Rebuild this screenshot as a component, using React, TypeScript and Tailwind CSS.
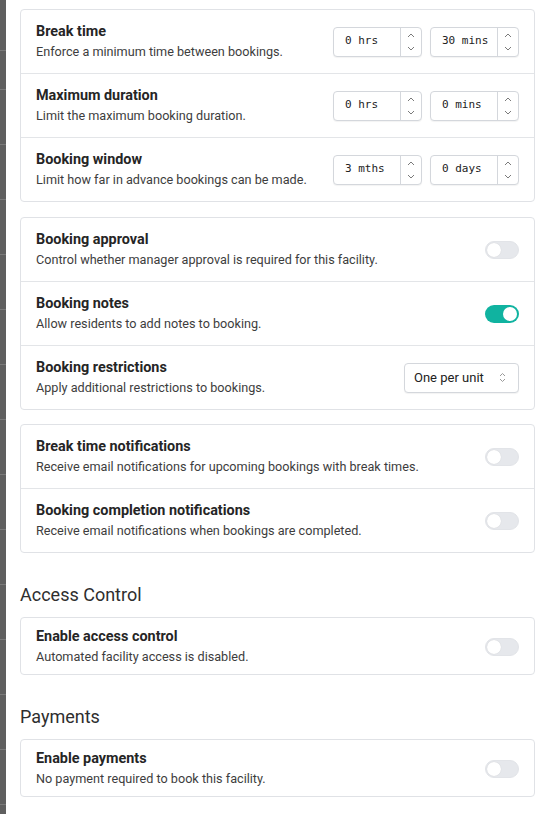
import React from "react";

const FONT = { fontFamily: "Roboto, 'Noto Sans', sans-serif" };

function Toggle({ on }: { on?: boolean }) {
  return on ? (
    <div className="flex h-[18px] w-[34px] shrink-0 items-center justify-end rounded-full bg-[#10b3a0] px-[2px]">
      <div className="h-[14px] w-[14px] rounded-full bg-white" />
    </div>
  ) : (
    <div className="flex h-[18px] w-[34px] shrink-0 items-center justify-start rounded-full border border-[#e2e4e8] bg-[#e6e8ec] px-[1px]">
      <div className="h-[14px] w-[14px] rounded-full bg-white shadow-[0_0_1px_rgba(0,0,0,0.15)]" />
    </div>
  );
}

function Spin({ value }: { value: string }) {
  return (
    <div className="flex h-[30px] w-[89px] rounded-[4px] border border-[#d4d7dc] bg-white shadow-[0_1px_1px_rgba(0,0,0,0.05)]">
      <div
        className="flex flex-1 items-center pl-[11px] text-[11px] text-[#222]"
        style={{ fontFamily: "'DejaVu Sans Mono', monospace" }}
      >
        {value}
      </div>
      <div className="flex w-[21px] flex-col items-center justify-center gap-[8px] border-l border-[#d4d7dc]">
        <svg width="8" height="5" viewBox="0 0 8 5" fill="none">
          <path d="M1 4L4 1L7 4" stroke="#7a7a7a" strokeWidth="1" />
        </svg>
        <svg width="8" height="5" viewBox="0 0 8 5" fill="none">
          <path d="M1 1L4 4L7 1" stroke="#7a7a7a" strokeWidth="1" />
        </svg>
      </div>
    </div>
  );
}

function Select() {
  return (
    <div className="flex h-[30px] w-[115px] items-center justify-between rounded-[4px] border border-[#d4d7dc] bg-white pl-[9px] pr-[12px] shadow-[0_1px_1px_rgba(0,0,0,0.05)]">
      <span className="text-[13px] text-[#222]">One per unit</span>
      <svg width="7" height="11" viewBox="0 0 7 11" fill="none">
        <path d="M1 4L3.5 1.5L6 4" stroke="#9a9a9a" strokeWidth="1" />
        <path d="M1 7L3.5 9.5L6 7" stroke="#9a9a9a" strokeWidth="1" />
      </svg>
    </div>
  );
}

function Text({ title, desc }: { title: string; desc: string }) {
  return (
    <div className="flex flex-col">
      <div className="text-[14.4px] font-bold leading-5 text-[#252525]">{title}</div>
      <div className="text-[12.65px] leading-5 text-[#3d3d3d]">{desc}</div>
    </div>
  );
}

function Row({
  title,
  desc,
  first,
  children,
}: {
  title: string;
  desc: string;
  first?: boolean;
  children: React.ReactNode;
}) {
  return (
    <div
      className={
        first
          ? "flex h-[63px] items-center justify-between pl-[15px] pr-[15px]"
          : "flex h-[64px] items-center justify-between border-t border-[#e3e5e8] pl-[15px] pr-[15px]"
      }
    >
      <Text title={title} desc={desc} />
      <div className="flex items-center gap-2">{children}</div>
    </div>
  );
}

function Card({ children }: { children: React.ReactNode }) {
  return <div className="rounded-[4px] border border-[#e0e2e6] bg-white">{children}</div>;
}

function Heading({ children }: { children: React.ReactNode }) {
  return (
    <div className="mb-[8px] mt-[28px] h-[28px] text-[18px] leading-[28px] text-[#2e2e2e]">{children}</div>
  );
}

function Line() {
  return <div className="h-px bg-[#7a7a7a]" />;
}

export default function App() {
  return (
    <div className="flex min-h-[814px] bg-white" style={FONT}>
      <div className="flex w-[6px] shrink-0 flex-col bg-[#5f5f5f]">
        <div className="h-[50px]" />
        <Line />
        <div className="h-[38px]" />
        <Line />
        <div className="h-[54px]" />
        <Line />
        <div className="h-[54px]" />
        <Line />
        <div className="h-[54px]" />
        <Line />
        <div className="h-[54px]" />
        <Line />
        <div className="h-[54px]" />
        <Line />
        <div className="h-[54px]" />
        <Line />
        <div className="h-[54px]" />
        <Line />
        <div className="h-[54px]" />
        <Line />
        <div className="h-[54px]" />
        <Line />
        <div className="h-[54px]" />
        <Line />
        <div className="h-[54px]" />
        <Line />
        <div className="h-[54px]" />
        <Line />
        <div className="h-[54px]" />
        <Line />
      </div>
      <div className="flex flex-1 flex-col pl-[14px] pr-[10px] pt-[9px]">
        <Card>
          <Row first title="Break time" desc="Enforce a minimum time between bookings.">
            <Spin value="0 hrs" />
            <Spin value="30 mins" />
          </Row>
          <Row title="Maximum duration" desc="Limit the maximum booking duration.">
            <Spin value="0 hrs" />
            <Spin value="0 mins" />
          </Row>
          <Row title="Booking window" desc="Limit how far in advance bookings can be made.">
            <Spin value="3 mths" />
            <Spin value="0 days" />
          </Row>
        </Card>
        <div className="h-[15px]" />
        <Card>
          <Row first title="Booking approval" desc="Control whether manager approval is required for this facility.">
            <Toggle />
          </Row>
          <Row title="Booking notes" desc="Allow residents to add notes to booking.">
            <Toggle on />
          </Row>
          <Row title="Booking restrictions" desc="Apply additional restrictions to bookings.">
            <Select />
          </Row>
        </Card>
        <div className="h-[14px]" />
        <Card>
          <Row first title="Break time notifications" desc="Receive email notifications for upcoming bookings with break times.">
            <Toggle />
          </Row>
          <Row title="Booking completion notifications" desc="Receive email notifications when bookings are completed.">
            <Toggle />
          </Row>
        </Card>
        <Heading>Access Control</Heading>
        <Card>
          <div className="flex items-center justify-between pb-[7px] pl-[15px] pr-[15px] pt-[9px]">
            <Text title="Enable access control" desc="Automated facility access is disabled." />
            <Toggle />
          </div>
        </Card>
        <Heading>Payments</Heading>
        <Card>
          <div className="flex items-center justify-between pb-[7px] pl-[15px] pr-[15px] pt-[9px]">
            <Text title="Enable payments" desc="No payment required to book this facility." />
            <Toggle />
          </div>
        </Card>
      </div>
    </div>
  );
}
